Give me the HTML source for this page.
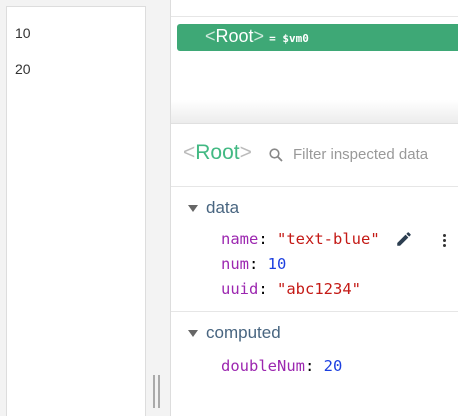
<!DOCTYPE html>
<html style="overflow:hidden;height:416px"><head><style>
body{margin:0;width:458px;height:416px;background:#f3f3f3;position:relative;overflow:hidden;font-family:"Liberation Sans",sans-serif}
.a{position:absolute}
.mono{font-family:"DejaVu Sans Mono","Liberation Mono",monospace;font-size:15.5px}
.k{color:#9c27b0}.s{color:#c41a16}.n{color:#1c3fe0}
</style></head><body>
<div class="a" style="left:6px;top:6px;width:138px;height:420px;background:#fff;border:1px solid #ddd"></div>
<div class="a" style="left:15px;top:25px;font-size:14px;color:#333">10</div>
<div class="a" style="left:15px;top:61px;font-size:14px;color:#333">20</div>
<div class="a" style="left:153px;top:375px;width:2px;height:33px;background:#aaa"></div>
<div class="a" style="left:158px;top:375px;width:2px;height:33px;background:#aaa"></div>
<div class="a" style="left:170px;top:0;width:288px;height:416px;background:#fff;border-left:1px solid #ddd;box-sizing:border-box"></div>
<div class="a" style="left:171px;top:16px;width:287px;height:1px;background:#e6e6e6"></div>
<div class="a" style="left:177px;top:24px;width:290px;height:27px;background:#3ea876;border-radius:3px"></div>
<div class="a" style="left:205px;top:26px;color:#fff;font-size:18px"><span style="color:#cfe9dc">&lt;</span>Root<span style="color:#cfe9dc">&gt;</span> <span class="mono" style="font-size:11px;font-weight:bold">= $vm0</span></div>
<div class="a" style="left:171px;top:100px;width:287px;height:23px;background:linear-gradient(#fff,#ececec)"></div>
<div class="a" style="left:171px;top:123px;width:287px;height:1px;background:#e0e0e0"></div>
<div class="a" style="left:183px;top:141px;font-size:21px;color:#42b983"><span style="color:#bbb">&lt;</span>Root<span style="color:#bbb">&gt;</span></div>
<svg class="a" style="left:268px;top:147px" width="16" height="16" viewBox="0 0 16 16"><circle cx="6.5" cy="6.5" r="4.3" fill="none" stroke="#888" stroke-width="1.6"/><path d="M9.8 9.8L14 14" stroke="#888" stroke-width="1.8"/></svg>
<div class="a" style="left:293px;top:146px;font-size:15px;color:#999">Filter inspected data</div>
<div class="a" style="left:171px;top:186px;width:287px;height:1px;background:#e6e6e6"></div>
<div class="a" style="left:188px;top:205px;width:0;height:0;border-left:5px solid transparent;border-right:5px solid transparent;border-top:7px solid #666"></div>
<div class="a" style="left:206px;top:198px;font-size:17px;color:#486580">data</div>
<div class="a mono" style="left:221px;top:230px"><span class="k">name</span>: <span class="s">"text-blue"</span></div>
<svg class="a" style="left:395px;top:230px" width="18" height="18" viewBox="0 0 24 24"><path fill="#2c3e50" d="M3 17.25V21h3.75L17.81 9.94l-3.75-3.75L3 17.25zM20.71 7.04a1 1 0 000-1.41l-2.34-2.34a1 1 0 00-1.41 0l-1.83 1.83 3.75 3.75 1.83-1.83z"/></svg>
<div class="a" style="left:443px;top:234px;width:3px;height:3px;border-radius:2px;background:#333;box-shadow:0 5px 0 #333,0 10px 0 #333"></div>
<div class="a mono" style="left:221px;top:255px"><span class="k">num</span>: <span class="n">10</span></div>
<div class="a mono" style="left:221px;top:280px"><span class="k">uuid</span>: <span class="s">"abc1234"</span></div>
<div class="a" style="left:171px;top:311px;width:287px;height:1px;background:#e6e6e6"></div>
<div class="a" style="left:188px;top:330px;width:0;height:0;border-left:5px solid transparent;border-right:5px solid transparent;border-top:7px solid #666"></div>
<div class="a" style="left:206px;top:323px;font-size:17px;color:#486580">computed</div>
<div class="a mono" style="left:221px;top:357px"><span class="k">doubleNum</span>: <span class="n">20</span></div>
</body></html>
